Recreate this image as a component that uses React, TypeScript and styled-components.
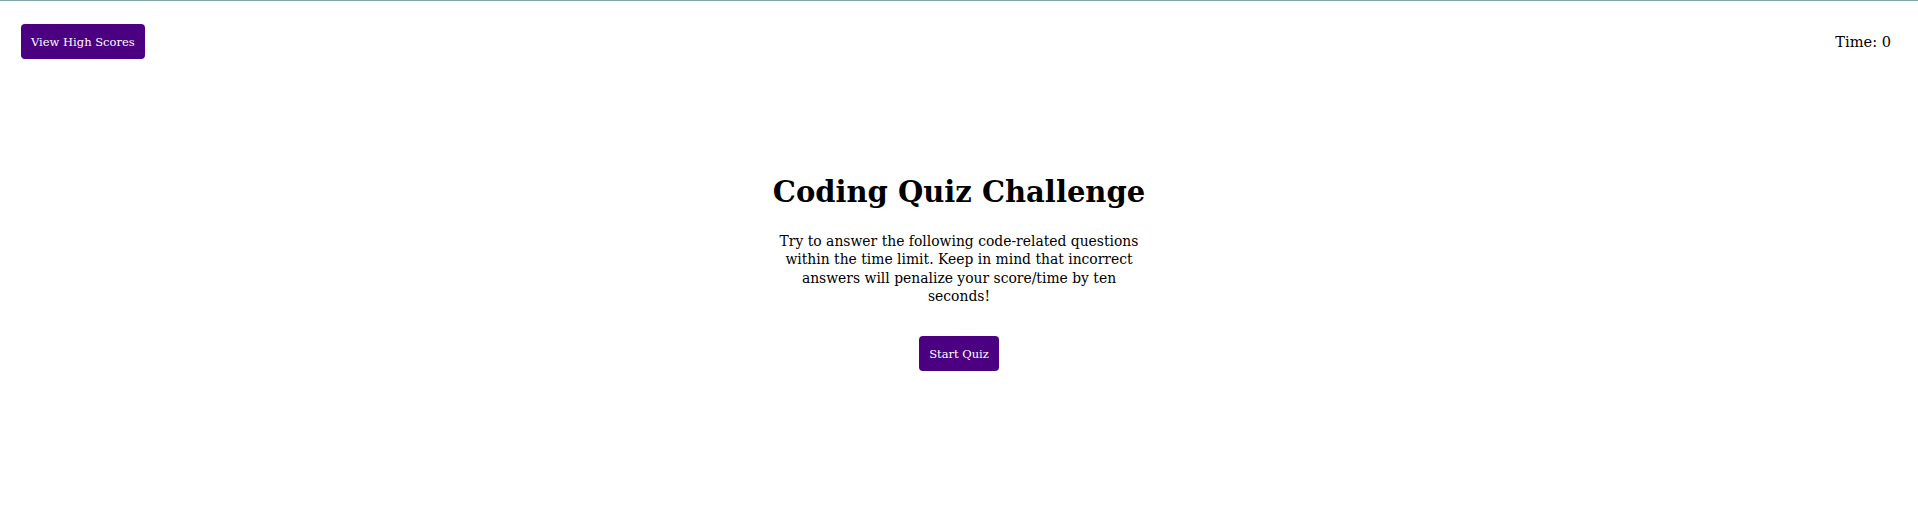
import React from "react";
import styled, { createGlobalStyle } from "styled-components";

const GlobalStyle = createGlobalStyle`
  html, body {
    margin: 0;
    padding: 0;
    background: #ffffff;
  }
  body {
    font-family: "DejaVu Serif", "Liberation Serif", serif;
    color: #000000;
    border-top: 1px solid #80a8a8;
  }
`;

const Page = styled.div`
  display: flex;
  flex-direction: column;
  min-height: 512px;
`;

const Header = styled.header`
  display: flex;
  justify-content: space-between;
  align-items: center;
  padding: 23px 27px 0 21px;
`;

const Button = styled.button`
  background: #4b0082;
  color: #ffffff;
  border: none;
  border-radius: 4px;
  padding: 0 10px;
  height: 35px;
  font-family: "DejaVu Serif", "Liberation Serif", serif;
  font-size: 11.5px;
  cursor: pointer;
`;

const Timer = styled.div`
  font-size: 14.6px;
`;

const Main = styled.main`
  display: flex;
  flex-direction: column;
  align-items: center;
  margin-top: 116px;
`;

const Title = styled.h1`
  margin: 0;
  font-size: 29px;
  font-weight: bold;
`;

const Intro = styled.p`
  margin: 23px 0 31px;
  width: 362px;
  text-align: center;
  font-size: 13.9px;
  line-height: 18.3px;
`;

export default function App() {
  return (
    <>
      <GlobalStyle />
      <Page>
        <Header>
          <Button>View High Scores</Button>
          <Timer>Time: 0</Timer>
        </Header>
        <Main>
          <Title>Coding Quiz Challenge</Title>
          <Intro>
            Try to answer the following code-related questions within the time
            limit. Keep in mind that incorrect answers will penalize your
            score/time by ten seconds!
          </Intro>
          <Button>Start Quiz</Button>
        </Main>
      </Page>
    </>
  );
}
